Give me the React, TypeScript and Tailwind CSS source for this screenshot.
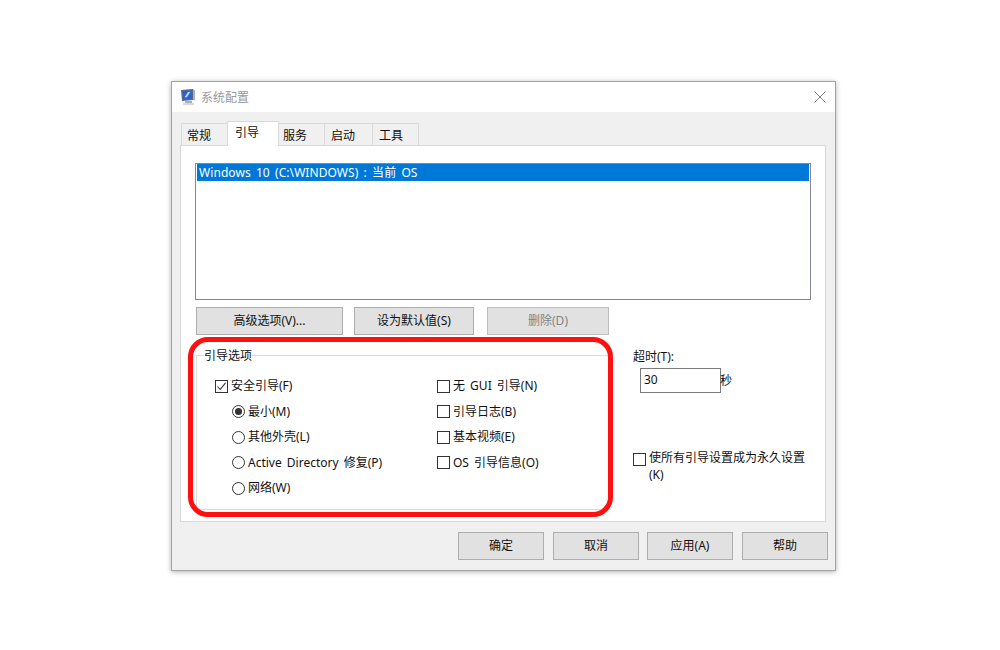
import { ReactNode } from "react";

const tabs = [
  { label: "常规", className: "w-[46px] pl-[5px] border-r-0" },
  { label: "引导", className: "w-[52px] pl-[7px]" },
  { label: "服务", className: "w-[46px] pl-[4px] border-l-0" },
  { label: "启动", className: "w-[48px] pl-[6px] border-l-0" },
  { label: "工具", className: "w-[46px] pl-[6px] border-l-0" },
];
const radios = ["最小(M)", "其他外壳(L)", "Active Directory 修复(P)", "网络(W)"];
const rightChecks = ["无 GUI 引导(N)", "引导日志(B)", "基本视频(E)", "OS 引导信息(O)"];

function CheckBox({ checked = false }: { checked?: boolean }) {
  return (
    <span className="flex w-[13px] h-[13px] shrink-0 items-center justify-center border border-[#333333] bg-white">
      {checked && (
        <svg width="11" height="11" viewBox="0 0 11 11" fill="none">
          <path d="M1.5 5.5 L4.2 8.5 L9.5 1.8" stroke="#333333" strokeWidth="1.1" />
        </svg>
      )}
    </span>
  );
}

function Radio({ checked = false }: { checked?: boolean }) {
  return (
    <span className="flex w-[13px] h-[13px] shrink-0 items-center justify-center rounded-full border border-[#333333] bg-white">
      {checked && <span className="w-[7px] h-[7px] rounded-full bg-[#333333]" />}
    </span>
  );
}

function Row({ children, label, className = "" }: { children: ReactNode; label: string; className?: string }) {
  return (
    <div className={`flex h-[25.5px] items-center gap-[3px] ${className}`}>
      {children}
      <span>{label}</span>
    </div>
  );
}

function Btn({ label, className = "" }: { label: string; className?: string }) {
  return (
    <div className={`flex h-[28px] shrink-0 items-center justify-center border border-[#adadad] bg-[#e1e1e1] ${className}`}>
      {label}
    </div>
  );
}

function AppIcon() {
  return (
    <svg width="16" height="18" viewBox="0 0 16 18">
      <path d="M1 2 L13 1 L13 12 L2 13 Z" fill="#59678f" />
      <path d="M2.5 3 L11.8 2.3 L11.8 10.8 L3.2 11.6 Z" fill="#2f62c8" />
      <path d="M4.5 9.5 L8 4 L10.5 3.8 L6.8 9.3 Z" fill="#b5dbf5" />
      <path d="M13 1 L15 2.5 L15 12.5 L13 12 Z" fill="#a8aec0" />
      <rect x="5" y="13" width="7" height="2" fill="#a9adb8" />
      <rect x="3" y="15" width="11" height="2" fill="#d6d8dd" />
    </svg>
  );
}

export default function App() {
  return (
    <div
      className="h-[650px] w-[1000px] overflow-hidden bg-white pl-[171px] pt-[81px] text-[12px] leading-[18px] text-[#111111] [word-spacing:2px]"
      style={{ fontFamily: '"Noto Sans", "Noto Sans CJK SC", sans-serif' }}
    >
      <div className="relative h-[490px] w-[665px] border border-[#a3a3a3] bg-[#f0f0f0] shadow-[0_1px_5px_rgba(0,0,0,0.3)]">
        {/* title bar */}
        <div className="flex h-[30px] items-center bg-white pl-[8px] pr-[9px]">
          <AppIcon />
          <span className="ml-[5px] translate-y-px text-[#999999]">系统配置</span>
          <svg className="ml-auto" width="12" height="12" viewBox="0 0 12 12" fill="none">
            <path d="M0.5 0.5 L11.5 11.5 M11.5 0.5 L0.5 11.5" stroke="#808080" strokeWidth="1" />
          </svg>
        </div>

        <div className="pl-[8px] pr-[9px] pt-[9px]">
          {/* tabs */}
          <div className="relative z-10 -mb-px flex h-[25px] items-end pl-[1px]">
            {tabs.map((t) =>
              t.label === "引导" ? (
                <div key={t.label} className={`h-[25px] border border-b-0 border-[#d9d9d9] bg-white pt-[2px] ${t.className}`}>
                  {t.label}
                </div>
              ) : (
                <div key={t.label} className={`h-[23px] border border-[#d9d9d9] bg-[#f0f0f0] pt-[3px] ${t.className}`}>
                  {t.label}
                </div>
              ),
            )}
          </div>

          {/* panel */}
          <div className="h-[377px] w-[646px] border border-[#d9d9d9] bg-white pl-[14px] pt-[17px]">
            <div className="h-[137px] w-[616px] border border-[#828790] px-px">
              <div className="flex h-[17px] items-center bg-[#0078d7] pl-[2px] tracking-[0.07px] text-white">
                Windows 10 (C:\WINDOWS) : 当前 OS
              </div>
            </div>

            <div className="ml-px mt-[7px] flex">
              <Btn label="高级选项(V)..." className="w-[147px]" />
              <Btn label="设为默认值(S)" className="ml-[11px] w-[120px]" />
              <Btn label="删除(D)" className="ml-[13px] w-[122px] border-[#bfbfbf] bg-[#cccccc] text-[#838383]" />
            </div>

            <div className="ml-px mt-[12px] flex">
              <fieldset className="h-[163px] w-[414px] border border-[#dcdcdc] pl-[18px] pt-[10.4px]">
                <legend className="-ml-[11px] h-[16px] translate-y-px leading-[16px]">引导选项</legend>
                <div className="flex">
                  <div className="w-[222px]">
                    <Row label="安全引导(F)">
                      <CheckBox checked />
                    </Row>
                    {radios.map((r, i) => (
                      <Row key={r} label={r} className="ml-[17px]">
                        <Radio checked={i === 0} />
                      </Row>
                    ))}
                  </div>
                  <div>
                    {rightChecks.map((c) => (
                      <Row key={c} label={c}>
                        <CheckBox />
                      </Row>
                    ))}
                  </div>
                </div>
              </fieldset>

              <div className="ml-[23px]">
                <div className="translate-y-px">超时(T):</div>
                <div className="ml-[7px] mt-[3px] flex items-center">
                  <div className="flex h-[25px] w-[81px] items-center border border-[#7a7a7a] pb-[1px] pl-[3px]">30</div>
                  <span className="-ml-px">秒</span>
                </div>
                <div className="mt-[55px] flex w-[178px] gap-[3px]">
                  <div className="pt-[5px]">
                    <CheckBox />
                  </div>
                  <div className="w-[162px] translate-y-px leading-[17px]">使所有引导设置成为永久设置(K)</div>
                </div>
              </div>
            </div>
          </div>

          {/* footer buttons */}
          <div className="mt-[10px] flex">
            <Btn label="确定" className="ml-[278px] w-[86px]" />
            <Btn label="取消" className="ml-[9px] w-[86px]" />
            <Btn label="应用(A)" className="ml-[8px] w-[86px]" />
            <Btn label="帮助" className="ml-[9px] w-[86px]" />
          </div>
        </div>

        {/* red annotation drawn over the dialog */}
        <div className="pointer-events-none absolute left-[16px] top-[255px] z-20 h-[180px] w-[425px] rounded-[20px] border-[5px] border-[#ff1010]" />
      </div>
    </div>
  );
}
